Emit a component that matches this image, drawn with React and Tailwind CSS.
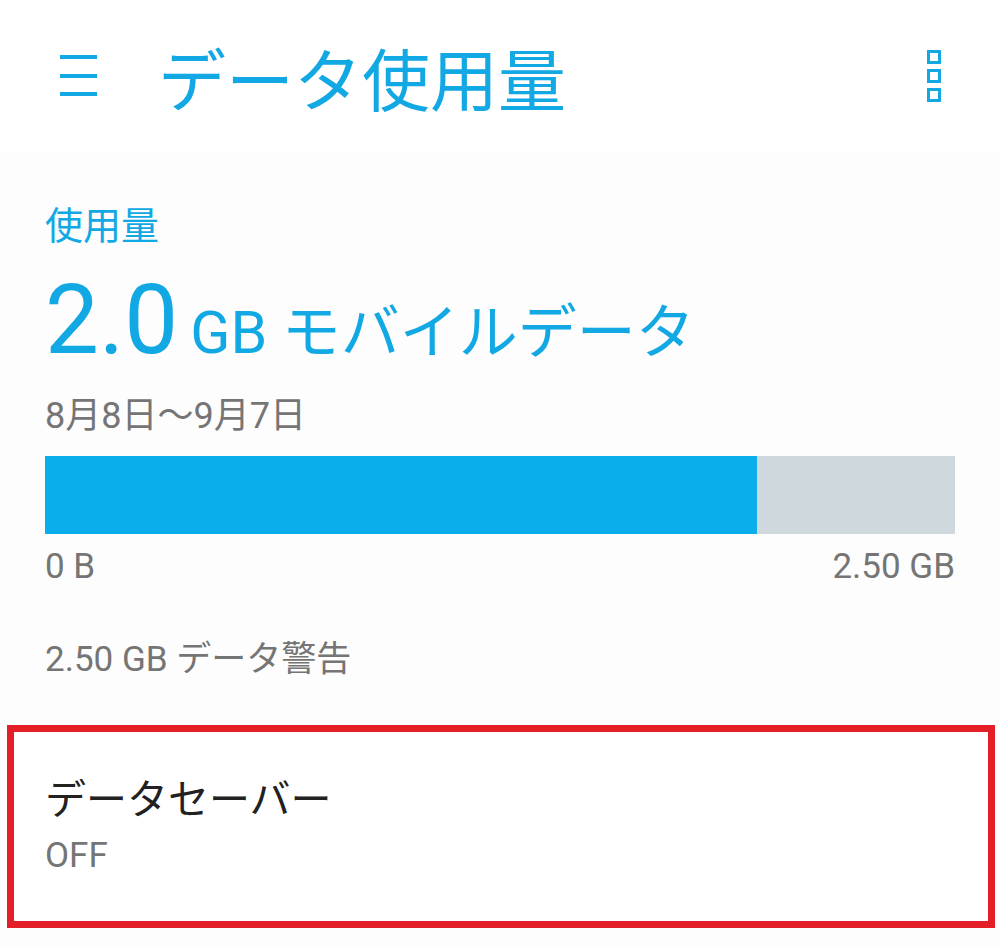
import React from 'react'

const font = { fontFamily: 'Roboto, "Noto Sans CJK JP", sans-serif' }

function MenuIcon() {
    return (
        <svg width="37" height="42" viewBox="0 0 37 42" className="text-[#12a8e3]">
            <rect x="0" y="0" width="37" height="4" fill="currentColor" />
            <rect x="0" y="19" width="37" height="4" fill="currentColor" />
            <rect x="0" y="37" width="37" height="4" fill="currentColor" />
        </svg>
    )
}

function OverflowIcon() {
    return (
        <svg width="14" height="52" viewBox="0 0 14 52" className="text-[#12a8e3]">
            <rect x="1.5" y="1.5" width="11" height="11" fill="none" stroke="currentColor" strokeWidth="3" />
            <rect x="1.5" y="20.5" width="11" height="11" fill="none" stroke="currentColor" strokeWidth="3" />
            <rect x="1.5" y="39.5" width="11" height="11" fill="none" stroke="currentColor" strokeWidth="3" />
        </svg>
    )
}

export default function App() {
    const used = 2.0
    const limit = 2.5
    const pct = (757 - 45) / 910 * 100

    return (
        <div className="w-[1000px] h-[948px] bg-[#fdfdfd] overflow-hidden" style={font}>
            {/* Toolbar */}
            <div className="h-[152px] bg-white flex items-center">
                <div className="ml-[60px] w-[98px] flex items-center">
                    <MenuIcon />
                </div>
                <h1 className="text-[68px] leading-none text-[#12a8e3] flex-1 pt-[13px]">データ使用量</h1>
                <div className="mr-[59px] flex items-center">
                    <OverflowIcon />
                </div>
            </div>

            {/* Usage summary */}
            <div className="px-[45px]">
                <div className="mt-[55px] text-[38px] leading-none text-[#12a8e3]">使用量</div>
                <div className="mt-[27px] flex items-baseline text-[#12a8e3] leading-none">
                    <span className="text-[96px]">{used.toFixed(1)}</span>
                    <span className="text-[59px] ml-[12px]">GB モバイルデータ</span>
                </div>
                <div className="mt-[30px] text-[36px] leading-none text-[#757575]">8月8日～9月7日</div>

                <div className="mt-[22px] h-[78px] bg-[#cfd8dc] flex">
                    <div className="h-full bg-[#0aaeeb]" style={{ width: `${pct}%` }} />
                </div>

                <div className="mt-[15px] flex justify-between text-[35px] leading-none text-[#757575]">
                    <span>0 B</span>
                    <span>{limit.toFixed(2)} GB</span>
                </div>

                <div className="mt-[58px] text-[35px] leading-none text-[#757575]">2.50 GB データ警告</div>
            </div>

            {/* Data saver (highlighted) */}
            <div className="mt-[48px] ml-[7px] mr-[5px] h-[203px] border-[7px] border-[#e41e26] bg-white pl-[31px] pt-[48px]">
                <div className="text-[41px] leading-none text-[#212121]">データセーバー</div>
                <div className="mt-[17px] text-[35px] leading-none text-[#757575]">OFF</div>
            </div>
        </div>
    )
}
